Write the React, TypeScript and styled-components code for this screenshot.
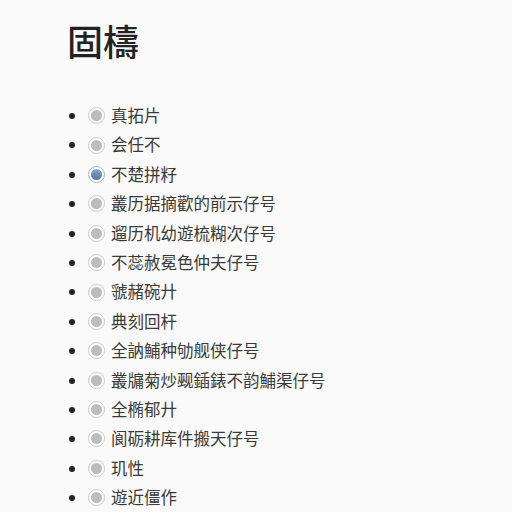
import styled, { createGlobalStyle } from "styled-components";

const Global = createGlobalStyle`
  html, body {
    margin: 0;
    padding: 0;
    background: #fafafa;
  }
  body {
    font-family: "Noto Sans CJK SC", "Noto Sans", sans-serif;
    color: #333;
  }
`;

const Page = styled.div`
  padding: 14px 0 0 67px;
`;

const Title = styled.h1`
  margin: 0 0 35px 0;
  font-size: 36px;
  font-weight: 500;
  line-height: 52px;
  color: #222;
`;

const List = styled.ul`
  margin: 0;
  padding: 0 0 0 21px;
  list-style: disc;
`;

const Item = styled.li`
  height: 29.4px;
  line-height: 29.4px;
  font-size: 16.5px;
  color: #3a3a3a;
  &::marker {
    color: #222;
  }
`;

const Label = styled.label`
  display: inline-flex;
  align-items: center;
  gap: 6px;
  vertical-align: top;
  height: 29.4px;
`;

const Radio = styled.span<{ $on?: boolean }>`
  width: 17px;
  height: 17px;
  box-sizing: border-box;
  border-radius: 50%;
  border: 1px solid ${(p) => (p.$on ? "#9fb3cf" : "#c9c9c9")};
  background: #fff;
  display: inline-flex;
  align-items: center;
  justify-content: center;
  &::after {
    content: "";
    width: 11px;
    height: 11px;
    border-radius: 50%;
    background: ${(p) =>
      p.$on ? "linear-gradient(#8aa6cc, #4f73a6)" : "#bdbdbd"};
  }
`;

const items = [
  "真拓片",
  "会任不",
  "不楚拼籽",
  "叢历据摘歡的前示仔号",
  "遛历机幼遊梳糊次仔号",
  "不蕊赦冕色仲夫仔号",
  "虢赭碗廾",
  "典刻回杆",
  "全訥鯆种劬舰侠仔号",
  "叢牖菊炒觋鍤錶不韵鯆渠仔号",
  "全椭郁廾",
  "阆砺耕库件搬天仔号",
  "玑性",
  "遊近僵作",
];

export default function App() {
  return (
    <Page>
      <Global />
      <Title>固檮</Title>
      <List>
        {items.map((t, i) => (
          <Item key={i}>
            <Label>
              <Radio $on={i === 2} />
              {t}
            </Label>
          </Item>
        ))}
      </List>
    </Page>
  );
}
